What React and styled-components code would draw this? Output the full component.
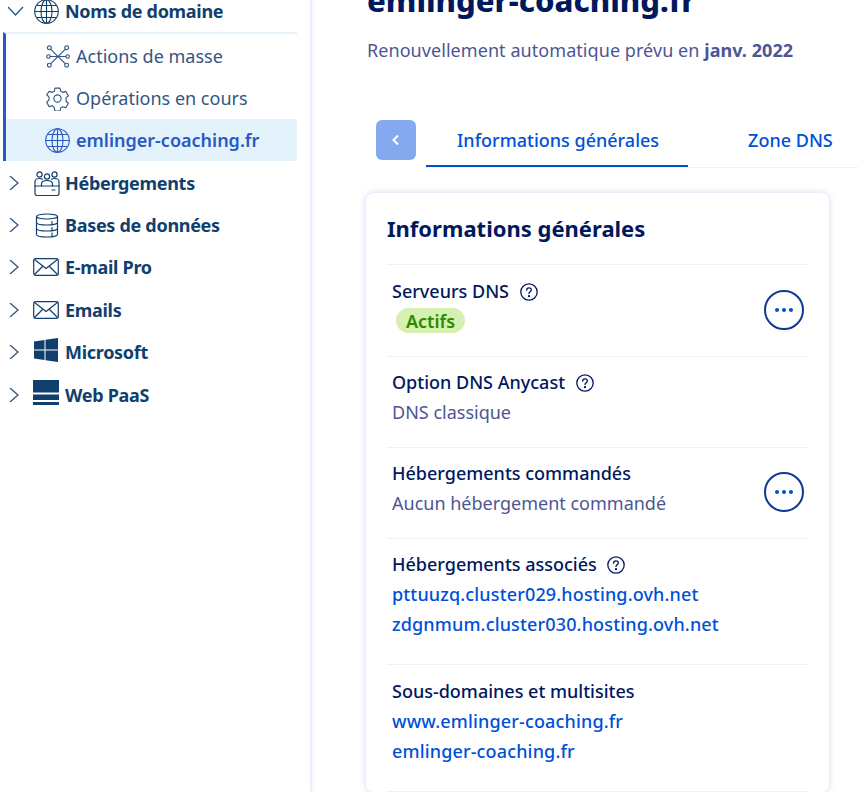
import React from "react";
import styled, { createGlobalStyle } from "styled-components";

const Global = createGlobalStyle`
  html, body { margin: 0; padding: 0; background: #fff; }
  body { font-family: "Noto Sans", "Liberation Sans", sans-serif; overflow: hidden; }
`;
const Page = styled.div`
  width: 858px; height: 792px; overflow: hidden; display: flex; background: #fff;
`;
const Side = styled.nav`
  width: 310px; flex: none; box-sizing: border-box; padding: 0 13px 0 3px;
  box-shadow: 1px 0 4px rgba(120,130,210,.28);
  display: flex; flex-direction: column;
  margin-top: -10px; height: 802px;
`;
const NavRow = styled.div`
  height: 42.4px; flex: none; display: flex; align-items: center; color: #113f6d;
  font-weight: 700; font-size: 18px; letter-spacing: -.3px;
`;
const Caret = styled.span`
  width: 30px; margin-left: 2px; display: flex; padding-left: 3px; box-sizing: border-box; flex: none;
`;
const IconBox = styled.span`
  width: 31px; margin-left: -1px; flex: none; display: flex; align-items: center; padding-top: 1px;
`;
const SubGroup = styled.div`
  border-top: 2px solid #e3f2fb; border-left: 3px solid #2859c5; padding-top: 1px;
  display: flex; flex-direction: column;
`;
const SubRow = styled.div`
  height: 42px; flex: none; display: flex; align-items: center; gap: 6px; padding-left: 39px;
  font-size: 18px; color: ${p => p.$active ? "#2859c5" : "#34567f"};
  background: ${p => p.$active ? "#e4f3fb" : "transparent"};
  font-weight: ${p => p.$active ? 600 : 400};
`;
const Main = styled.main`
  flex: 1; min-width: 0; padding-left: 57px; display: flex; flex-direction: column;
`;
const Title = styled.h1`
  margin: -20px 0 0; font-size: 31px; line-height: 40px; font-weight: 800; color: #00185e; white-space: nowrap;
`;
const Sub = styled.p`
  margin: 15px 0 0; font-size: 18px; line-height: 30px; color: #4d5693; white-space: nowrap; letter-spacing: .06px;
  b { font-weight: 700; }
`;
const Tabs = styled.div`
  display: flex; margin: 55px 0 0 9px; align-items: flex-start; width: 482px; height: 48px;
`;
const Back = styled.button`
  width: 40px; height: 40px; border: 0; padding: 0; border-radius: 6px; background: #85a9ee; flex: none;
  display: flex; align-items: center; justify-content: center; margin-right: 10px;
`;
const TabList = styled.div`
  flex: 1; display: flex; height: 48px; box-sizing: border-box; border-bottom: 1px solid #eef2f8;
`;
const Tab = styled.div`
  height: 47px; box-sizing: border-box; padding: 5px 30px 0 31px; font-size: 18px; line-height: 30px; font-weight: 500; color: #0050d7; white-space: nowrap;
  border-bottom: 2px solid ${p => p.$active ? "#0050d7" : "transparent"};
  padding-right: ${p => p.$active ? "29px" : "0"};
  margin-right: ${p => p.$active ? "30px" : "0"};
  margin-left: ${p => p.$active ? "0" : "-1px"};
`;
const Card = styled.section`
  margin: 25px 0 0 -1px; width: 463px; box-sizing: border-box; padding: 0 21px; border-radius: 8px; background: #fff;
  box-shadow: 0 0 6px rgba(110,120,220,.32); flex: none;
`;
const CardTitle = styled.h2`
  margin: 0; padding: 18px 0 19px; font-size: 22px; line-height: 34px; font-weight: 700; color: #00185e;
  border-bottom: 1px solid #f0f1f4;
`;
const Row = styled.div`
  display: flex; align-items: center; justify-content: space-between;
  padding: ${p => p.$top}px 5px ${p => p.$bottom}px; border-bottom: 1px solid #f0f1f4;
`;
const Col = styled.div`display: flex; flex-direction: column; align-items: flex-start;`;
const Label = styled.div`
  display: flex; align-items: center; gap: 10.5px; font-size: 18px; line-height: 30px; font-weight: 500; color: #00185e; white-space: nowrap;
`;
const Value = styled.div`font-size: 18px; line-height: 30px; color: #4d5693; white-space: nowrap;`;
const Link = styled.a`font-size: 18px; line-height: 30px; color: #0050d7; font-weight: 500; white-space: nowrap; letter-spacing: .15px;`;
const Badge = styled.span`
  margin: 2px 0 3px 4px; height: 25px; width: 69px; border-radius: 13px; background: #d5f0b0; color: #2a8a00; font-weight: 600; font-size: 18px;
  display: flex; align-items: center; justify-content: center;
`;
const More = styled.button`
  width: 40px; height: 40px; border-radius: 50%; box-sizing: border-box; border: 2px solid #0a3a94; background: #fff; padding: 0; margin-right: -1px; margin-bottom: -7px;
  display: flex; align-items: center; justify-content: center; flex: none;
`;

const S = { fill: "none", stroke: "#113f6d", strokeWidth: 1.2, strokeLinecap: "round", strokeLinejoin: "round" };
const Chevron = ({ down }) => (
  <svg width="16" height="14" viewBox="0 0 16 14" fill="none" stroke="#2f5580" strokeWidth="1.3">
    {down ? <path d="M0 3l7.500 8 7.500-8" /> : <path d="M2 0l8 7-8 7" />}
  </svg>
);
const Globe = ({ c = "#113f6d", s = 25 }) => (
  <svg width={s} height={s} viewBox="0 0 25 25" fill="none" stroke={c} strokeWidth="1.1">
    <circle cx="12.5" cy="12.5" r="11.8" />
    <ellipse cx="12.5" cy="12.5" rx="5.5" ry="11.8" />
    <path d="M12.5 1v23M1 12.5h23M3 6.5h19M3 18.5h19" />
  </svg>
);
const Nodes = () => (
  <svg width="24" height="25" viewBox="0 0 25 25" {...S} stroke="#34567f" style={{ marginLeft: 1 }}>
    <circle cx="3.5" cy="3.5" r="2" /><circle cx="21.5" cy="3.5" r="2" />
    <circle cx="3.5" cy="21.5" r="2" /><circle cx="21.500" cy="21.500" r="2" />
    <circle cx="2.5" cy="12.5" r="1.8" /><circle cx="22.5" cy="12.5" r="1.8" />
    <path d="M5 5l15 15M20 5L5 20M4.500 12.500h16" />
  </svg>
);
const Gear = () => (
  <svg width="25" height="25" viewBox="0 0 24 24" fill="none" stroke="#34567f" strokeWidth="1.1" strokeLinejoin="round">
    <circle cx="12" cy="12" r="3.5" />
    <path d="M9.6 2h4.8l.7 3 1.900 1.100 3-.9 2.400 4.200-2.200 2v3.200l2.200 2-2.400 4.200-3-.9-1.900 1.100-.7 3H9.600l-.7-3L7 18.900l-3 .9-2.400-4.200 2.200-2v-3.200l-2.200-2L4 5.200l3 .9L8.900 5z" />
  </svg>
);
const Team = () => (
  <svg width="26" height="25" viewBox="0 0 26 25" {...S}>
    <circle cx="5.500" cy="3.500" r="2.600" /><circle cx="20.500" cy="3.500" r="2.600" /><circle cx="13" cy="5.500" r="2.600" />
    <path d="M1 15v-4.500c0-2 2-3 4.500-3 1.200 0 2 .2 3 .7M25 15v-4.500c0-2-2-3-4.500-3-1.200 0-2 .2-3 .7M7.500 15v-2c0-2 2-3.500 5.500-3.500s5.500 1.500 5.500 3.500v2" />
    <path d="M1 15h24v7.500a2 2 0 0 1-2 2H3a2 2 0 0 1-2-2z" /><path d="M18 19h3" />
  </svg>
);
const Db = () => (
  <svg width="24" height="25" viewBox="0 0 24 25" {...S} style={{ marginLeft: 1 }}>
    <ellipse cx="12" cy="3.500" rx="10.500" ry="2.500" />
    <path d="M1.500 3.500v18c0 1.500 4.500 2.500 10.500 2.500s10.500-1 10.500-2.500v-18M1.500 9.500c0 1.500 4.500 2.500 10.500 2.500s10.500-1 10.500-2.500M1.500 15.500c0 1.500 4.500 2.500 10.500 2.500s10.500-1 10.500-2.500M17 8.500v3M17 14.500v3M17 20v2.500" />
  </svg>
);
const Mail = () => (
  <svg width="26" height="18" viewBox="0 0 26 18" {...S} style={{ marginLeft: -1, marginBottom: 1 }}>
    <rect x=".7" y=".7" width="24.600" height="16.600" rx="2" /><path d="M1.500 1.500l11.500 9 11.500-9M1.500 16.500l8-8M24.500 16.500l-8-8" />
  </svg>
);
const Win = () => (
  <svg width="24" height="24" viewBox="0 0 24 24" fill="#113f6d" style={{ marginBottom: 6 }}>
    <path d="M0 3.500l10.500-1.500v9.500H0zM11.500 1.800L24 0v11.500H11.500zM0 12.500h10.500V22L0 20.500zM11.500 12.500H24V24l-12.500-1.800z" />
  </svg>
);
const Paas = () => (
  <svg width="26" height="25" viewBox="0 0 26 25" fill="#113f6d" style={{ marginLeft: -1, marginBottom: 6 }}>
    <rect width="26" height="12.500" /><rect y="14.500" width="26" height="5.500" /><rect y="22" width="26" height="3" />
  </svg>
);
const Help = () => (
  <svg width="18" height="18" viewBox="0 0 18 18" fill="none" stroke="#00185e" strokeWidth="1.300" strokeLinecap="round" style={{ marginTop: 2 }}>
    <circle cx="9" cy="9" r="8.200" />
    <path d="M6.600 7.200c0-1.400 1-2.400 2.400-2.400s2.300.9 2.300 2.100c0 1.800-2.300 1.700-2.300 3.500" />
    <circle cx="9" cy="13.200" r=".5" fill="#00185e" />
  </svg>
);
const Dots = () => (
  <svg width="20" height="6" viewBox="0 0 20 6" fill="#0050d7"><circle cx="3" cy="3" r="2" /><circle cx="10" cy="3" r="2" /><circle cx="17" cy="3" r="2" /></svg>
);

const nav = [["Hébergements", <Team />], ["Bases de données", <Db />], ["E-mail Pro", <Mail />], ["Emails", <Mail />], ["Microsoft", <Win />], ["Web PaaS", <Paas />]];

export default function App() {
  return (
    <Page>
      <Global />
      <Side>
        <NavRow><Caret><Chevron down /></Caret><IconBox><Globe /></IconBox>Noms de domaine</NavRow>
        <SubGroup>
          <SubRow><Nodes />Actions de masse</SubRow>
          <SubRow><Gear />Opérations en cours</SubRow>
          <SubRow $active><Globe c="#2859c5" />emlinger-coaching.fr</SubRow>
        </SubGroup>
        {nav.map(([t, i]) => <NavRow key={t}><Caret><Chevron /></Caret><IconBox>{i}</IconBox>{t}</NavRow>)}
      </Side>
      <Main>
        <Title>emlinger-coaching.fr</Title>
        <Sub>Renouvellement automatique prévu en <b>janv. 2022</b></Sub>
        <Tabs>
          <Back aria-label="Précédent">
            <svg width="10" height="12" viewBox="0 0 10 12" fill="none" stroke="#fff" strokeWidth="2"><path d="M7 1.500L2.500 6 7 10.500" /></svg>
          </Back>
          <TabList>
            <Tab $active>Informations générales</Tab>
            <Tab>Zone DNS</Tab>
          </TabList>
        </Tabs>
        <Card>
          <CardTitle>Informations générales</CardTitle>
          <Row $top={11} $bottom={20}>
            <Col><Label>Serveurs DNS <Help /></Label><Badge>Actifs</Badge></Col>
            <More aria-label="Actions"><Dots /></More>
          </Row>
          <Row $top={10} $bottom={20}>
            <Col><Label>Option DNS Anycast <Help /></Label><Value>DNS classique</Value></Col>
          </Row>
          <Row $top={10} $bottom={20}>
            <Col><Label>Hébergements commandés</Label><Value>Aucun hébergement commandé</Value></Col>
            <More aria-label="Actions"><Dots /></More>
          </Row>
          <Row $top={10} $bottom={25}>
            <Col><Label>Hébergements associés <Help /></Label>
              <Link>pttuuzq.cluster029.hosting.ovh.net</Link>
              <Link>zdgnmum.cluster030.hosting.ovh.net</Link></Col>
          </Row>
          <Row $top={11} $bottom={25}>
            <Col><Label>Sous-domaines et multisites</Label>
              <Link>www.emlinger-coaching.fr</Link>
              <Link>emlinger-coaching.fr</Link></Col>
          </Row>
        </Card>
      </Main>
    </Page>
  );
}
